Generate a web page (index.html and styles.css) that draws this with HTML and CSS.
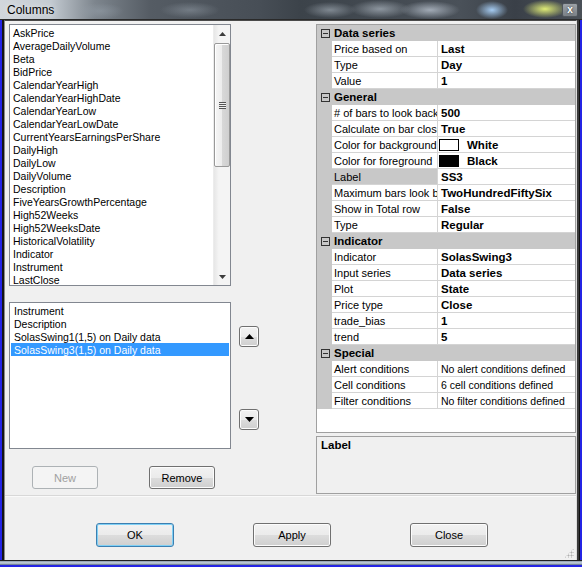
FILE: index.html
```html
<!DOCTYPE html>
<html>
<head>
<meta charset="utf-8">
<link rel="stylesheet" href="styles.css">
</head>
<body>
<div class="window">
  <div class="titlebar">
    <span class="title">Columns</span>
    <div class="closebtn">x</div>
  </div>
  <div class="frame-mid">
    <div class="frame-l"></div>
    <div class="client">
      <div class="top">
        <div class="left">
          <div class="list list1">
            <div class="items">
              <div class="item">AskPrice</div>
              <div class="item">AverageDailyVolume</div>
              <div class="item">Beta</div>
              <div class="item">BidPrice</div>
              <div class="item">CalendarYearHigh</div>
              <div class="item">CalendarYearHighDate</div>
              <div class="item">CalendarYearLow</div>
              <div class="item">CalendarYearLowDate</div>
              <div class="item">CurrentYearsEarningsPerShare</div>
              <div class="item">DailyHigh</div>
              <div class="item">DailyLow</div>
              <div class="item">DailyVolume</div>
              <div class="item">Description</div>
              <div class="item">FiveYearsGrowthPercentage</div>
              <div class="item">High52Weeks</div>
              <div class="item">High52WeeksDate</div>
              <div class="item">HistoricalVolatility</div>
              <div class="item">Indicator</div>
              <div class="item">Instrument</div>
              <div class="item">LastClose</div>
            </div>
            <div class="vscroll">
              <div class="sb-arrow"><svg width="7" height="4" viewBox="0 0 7 4"><polygon points="0,4 7,4 3.5,0" fill="#3c3c3c"/></svg></div>
              <div class="sb-track">
                <div class="sb-thumb">
                  <div class="grip"></div>
                </div>
              </div>
              <div class="sb-arrow"><svg width="7" height="4" viewBox="0 0 7 4"><polygon points="0,0 7,0 3.5,4" fill="#3c3c3c"/></svg></div>
            </div>
          </div>
          <div class="mid">
            <div class="list list2">
              <div class="item">Instrument</div>
              <div class="item">Description</div>
              <div class="item">SolasSwing1(1,5) on Daily data</div>
              <div class="item selected">SolasSwing3(1,5) on Daily data</div>
            </div>
            <div class="arrows">
              <div class="btn sq up"><svg width="9" height="5" viewBox="0 0 9 5"><polygon points="0,5 9,5 4.5,0" fill="#000"/></svg></div>
              <div class="btn sq down"><svg width="9" height="5" viewBox="0 0 9 5"><polygon points="0,0 9,0 4.5,5" fill="#000"/></svg></div>
            </div>
          </div>
          <div class="lbtns">
            <div class="btn disabled small">New</div>
            <div class="btn small remove">Remove</div>
          </div>
        </div>
        <div class="right">
          <div class="grid">
            <div class="row cat"><div class="mg"><span class="exp"></span></div><div class="cattext">Data series</div></div>
            <div class="row"><div class="mg"></div><div class="nm">Price based on</div><div class="vl">Last</div></div>
            <div class="row"><div class="mg"></div><div class="nm">Type</div><div class="vl">Day</div></div>
            <div class="row"><div class="mg"></div><div class="nm">Value</div><div class="vl">1</div></div>
            <div class="row cat"><div class="mg"><span class="exp"></span></div><div class="cattext">General</div></div>
            <div class="row"><div class="mg"></div><div class="nm"># of bars to look back</div><div class="vl">500</div></div>
            <div class="row"><div class="mg"></div><div class="nm">Calculate on bar close</div><div class="vl">True</div></div>
            <div class="row"><div class="mg"></div><div class="nm">Color for background</div><div class="vl"><span class="swatch white"></span>White</div></div>
            <div class="row"><div class="mg"></div><div class="nm">Color for foreground</div><div class="vl"><span class="swatch black"></span>Black</div></div>
            <div class="row sel"><div class="mg"></div><div class="nm">Label</div><div class="vl">SS3</div></div>
            <div class="row"><div class="mg"></div><div class="nm">Maximum bars look back</div><div class="vl">TwoHundredFiftySix</div></div>
            <div class="row"><div class="mg"></div><div class="nm">Show in Total row</div><div class="vl">False</div></div>
            <div class="row"><div class="mg"></div><div class="nm">Type</div><div class="vl">Regular</div></div>
            <div class="row cat"><div class="mg"><span class="exp"></span></div><div class="cattext">Indicator</div></div>
            <div class="row"><div class="mg"></div><div class="nm">Indicator</div><div class="vl">SolasSwing3</div></div>
            <div class="row"><div class="mg"></div><div class="nm">Input series</div><div class="vl">Data series</div></div>
            <div class="row"><div class="mg"></div><div class="nm">Plot</div><div class="vl">State</div></div>
            <div class="row"><div class="mg"></div><div class="nm">Price type</div><div class="vl">Close</div></div>
            <div class="row"><div class="mg"></div><div class="nm">trade_bias</div><div class="vl">1</div></div>
            <div class="row"><div class="mg"></div><div class="nm">trend</div><div class="vl">5</div></div>
            <div class="row cat"><div class="mg"><span class="exp"></span></div><div class="cattext">Special</div></div>
            <div class="row"><div class="mg"></div><div class="nm">Alert conditions</div><div class="vl plain">No alert conditions defined</div></div>
            <div class="row"><div class="mg"></div><div class="nm">Cell conditions</div><div class="vl plain">6 cell conditions defined</div></div>
            <div class="row"><div class="mg"></div><div class="nm">Filter conditions</div><div class="vl plain">No filter conditions defined</div></div>
          </div>
          <div class="desc">Label</div>
        </div>
      </div>
      <div class="bottom">
        <div class="btn big ok">OK</div>
        <div class="btn big">Apply</div>
        <div class="btn big">Close</div>
        <div class="sizegrip"></div>
      </div>
    </div>
    <div class="frame-r"></div>
  </div>
  <div class="frame-bottom"></div>
</div>
</body>
</html>
```

FILE: styles.css
```css
* { box-sizing: border-box; }
html, body {
  margin: 0;
  padding: 0;
  width: 582px;
  height: 567px;
  overflow: hidden;
  background: #2020d8;
  font-family: "Liberation Sans", Arial, sans-serif;
  font-size: 10.5px;
  color: #000;
}
.window {
  width: 582px;
  height: 567px;
  display: flex;
  flex-direction: column;
}
.titlebar {
  height: 20px;
  flex: none;
  display: flex;
  align-items: flex-start;
  background:
    radial-gradient(ellipse 22px 9px at 545px 9px, rgba(232,245,120,0.95), rgba(232,245,120,0)),
    radial-gradient(ellipse 16px 9px at 492px 10px, rgba(170,210,250,0.95), rgba(170,210,250,0)),
    radial-gradient(ellipse 30px 9px at 430px 10px, rgba(200,210,222,0.7), rgba(200,210,222,0)),
    radial-gradient(ellipse 30px 9px at 380px 9px, rgba(190,200,210,0.6), rgba(190,200,210,0)),
    radial-gradient(ellipse 26px 8px at 330px 10px, rgba(170,180,190,0.6), rgba(170,180,190,0)),
    radial-gradient(ellipse 30px 8px at 190px 10px, rgba(150,160,170,0.5), rgba(150,160,170,0)),
    radial-gradient(ellipse 24px 8px at 100px 11px, rgba(150,160,170,0.5), rgba(150,160,170,0)),
    linear-gradient(to right, #d2d7dc 0, #c4cbd2 50px, #7d858d 95px, #555c64 150px, #474e56 260px, #3c434a 300px, #4a5159 460px, #3a4048 515px, #4a5058 582px);
  border-bottom: 1px solid #2a2a2a;
}
.title {
  font-size: 12px;
  padding: 3px 0 0 7px;
  color: #000;
  text-shadow: 0 0 6px rgba(255,255,255,0.8);
}
.closebtn {
  margin-left: auto;
  margin-right: 4px;
  margin-top: 3px;
  width: 16px;
  height: 14px;
  border: 1px solid #50565c;
  border-radius: 2px;
  background: linear-gradient(#9ca2a8, #7a8086);
  color: #fff;
  font-weight: bold;
  font-size: 10px;
  line-height: 11px;
  text-align: center;
  text-shadow: 0 0 2px #222;
}
.frame-mid {
  flex: 1;
  display: flex;
}
.frame-l {
  width: 4px;
  background: linear-gradient(to right, #2424e4 0, #2424e4 2px, #151515 2px, #151515 4px);
}
.frame-r {
  width: 5px;
  background: linear-gradient(to right, #3a3a3a 0, #3a3a3a 2px, #101010 2px, #101010 3px, #2424e4 3px);
}
.frame-bottom {
  height: 7px;
  flex: none;
  background: linear-gradient(to bottom, #202020 0, #202020 1px, #8a99aa 1px, #c8d4e0 3px, #5a6a80 5px, #2424e4 5px);
}
.client {
  flex: 1;
  background: #f0f0f0;
  border-top: 1px solid #4a4a4a;
  border-left: 1px solid #8a8a8a;
  border-right: 1px solid #dcdcdc;
  display: flex;
  flex-direction: column;
}
.top {
  height: 476px;
  flex: none;
  display: flex;
  padding-top: 3px;
  border-bottom: 1px solid #fafafa;
  box-shadow: 0 -1px 0 #d8d8d8 inset;
}
.left {
  width: 311px;
  padding-left: 4px;
  display: flex;
  flex-direction: column;
}
.list {
  background: #fff;
  border: 1px solid #828790;
  width: 222px;
  overflow: hidden;
}
.item {
  height: 13px;
  line-height: 15px;
  padding-left: 2px;
  white-space: nowrap;
  overflow: hidden;
}
.list1 {
  height: 262px;
  display: flex;
}
.list1 .items {
  flex: 1;
  padding-top: 1px;
  padding-left: 1px;
}
.vscroll {
  width: 17px;
  display: flex;
  flex-direction: column;
  background: linear-gradient(to right, #e6e6e6, #f4f4f4 30%, #f4f4f4);
  border-left: 1px solid #ececec;
}
.sb-arrow {
  height: 17px;
  display: flex;
  align-items: center;
  justify-content: center;
}
.sb-track {
  flex: 1;
}
.sb-thumb {
  margin-top: 1px;
  width: 16px;
  height: 124px;
  border: 1px solid #999;
  border-radius: 2px;
  background: linear-gradient(to right, #f6f6f6 0, #ececec 50%, #d8d8d8 51%, #cfcfcf 100%);
  box-shadow: inset 1px 1px 0 #fff;
  display: flex;
  align-items: center;
  justify-content: center;
}
.grip {
  width: 7px;
  height: 7px;
  background: repeating-linear-gradient(to bottom, #555 0, #555 1px, #f0f0f0 1px, #f0f0f0 2px);
}
.mid {
  margin-top: 16px;
  display: flex;
}
.list2 {
  height: 147px;
  padding: 1px;
}
.list2 .item {
  padding-left: 3px;
}
.item.selected {
  background: #3399ff;
  color: #fff;
}
.arrows {
  margin-left: 8px;
  display: flex;
  flex-direction: column;
}
.btn {
  border: 1px solid #707070;
  border-radius: 3px;
  background: linear-gradient(#f2f2f2 0, #ebebeb 50%, #dddddd 50%, #cfcfcf 100%);
  box-shadow: inset 0 0 0 1px #fcfcfc;
  display: flex;
  align-items: center;
  justify-content: center;
  font-size: 11px;
}
.sq {
  width: 20px;
  height: 21px;
}
.sq.up { margin-top: 24px; }
.sq.down { margin-top: 62px; }
.lbtns {
  margin-top: 17px;
  padding-left: 23px;
  display: flex;
}
.small {
  width: 66px;
  height: 23px;
}
.remove { margin-left: 51px; }
.btn.disabled {
  border-color: #adb2b5;
  background: #f4f4f4;
  box-shadow: none;
  color: #a0a0a0;
}
.right {
  width: 260px;
  display: flex;
  flex-direction: column;
}
.grid {
  height: 409px;
  border: 1px solid #a0a0a0;
  background: #fff;
  overflow: hidden;
}
.row {
  height: 16px;
  display: flex;
}
.mg {
  width: 15px;
  flex: none;
  background: #c8c8c8;
  display: flex;
  align-items: flex-start;
  justify-content: center;
}
.exp {
  margin-top: 4px;
  margin-left: 2px;
  width: 9px;
  height: 9px;
  border: 1px solid #333;
  background: linear-gradient(#333, #333) center / 5px 1px no-repeat;
}
.cat {
  background: #c8c8c8;
}
.cattext {
  padding-left: 2px;
  font-weight: bold;
  font-size: 11.5px;
  line-height: 16px;
}
.nm {
  width: 106px;
  flex: none;
  padding-left: 2px;
  border-right: 1px solid #d4d4d4;
  border-bottom: 1px solid #d4d4d4;
  white-space: nowrap;
  overflow: hidden;
  font-size: 11px;
  line-height: 16px;
}
.vl {
  flex: 1;
  padding-left: 3px;
  border-bottom: 1px solid #d4d4d4;
  font-weight: bold;
  font-size: 11.5px;
  line-height: 16px;
  white-space: nowrap;
  overflow: hidden;
  display: flex;
  align-items: flex-start;
}
.vl.plain {
  font-weight: normal;
  font-size: 10.5px;
}
.sel .nm {
  background: #c8c8c8;
}
.swatch {
  width: 20px;
  height: 12px;
  margin-top: 2px;
  border: 1px solid #000;
  margin-left: -2px;
  margin-right: 8px;
}
.swatch.white { background: #fff; }
.swatch.black { background: #000; }
.desc {
  margin-top: 3px;
  height: 58px;
  border: 1px solid #a0a0a0;
  background: #f0f0f0;
  padding: 2px 0 0 4px;
  font-weight: bold;
  font-size: 11.5px;
}
.bottom {
  flex: 1;
  display: flex;
  align-items: flex-start;
  padding-top: 26px;
  padding-left: 91px;
  position: relative;
}
.big {
  width: 78px;
  height: 24px;
  margin-right: 79px;
}
.btn.ok {
  border-color: #3c7fb1;
  box-shadow: inset 0 0 0 1px #7fd0f5;
}
.sizegrip {
  position: absolute;
  right: 2px;
  bottom: 2px;
  width: 10px;
  height: 10px;
  background:
    radial-gradient(circle, #b0b0b0 0.9px, transparent 1.1px) 0 0 / 3px 3px;
  clip-path: polygon(100% 0, 100% 100%, 0 100%);
}
```
